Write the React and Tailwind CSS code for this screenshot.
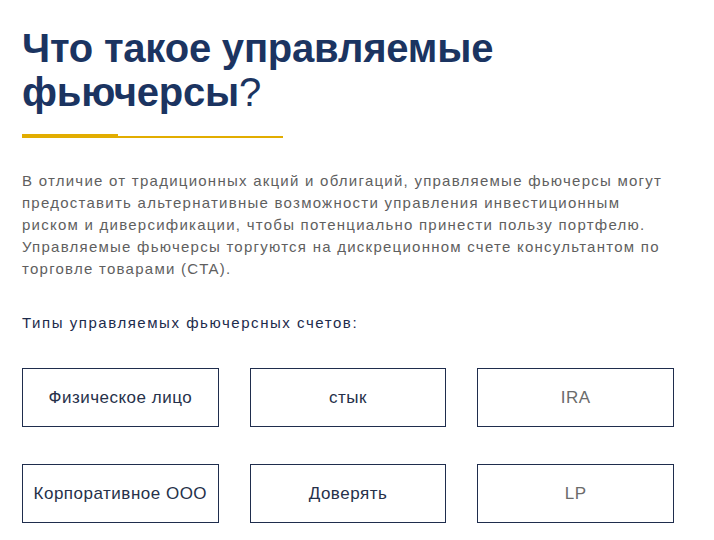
import React from 'react';

const types = [
    {label: 'Физическое лицо', dim: false},
    {label: 'стык', dim: false},
    {label: 'IRA', dim: true},
    {label: 'Корпоративное ООО', dim: false},
    {label: 'Доверять', dim: false},
    {label: 'LP', dim: true},
];

const lines = [
    'В отличие от традиционных акций и облигаций, управляемые фьючерсы могут',
    'предоставить альтернативные возможности управления инвестиционным',
    'риском и диверсификации, чтобы потенциально принести пользу портфелю.',
    'Управляемые фьючерсы торгуются на дискреционном счете консультантом по',
    'торговле товарами (CTA).',
];

const App = () => {
    return (
        <div className="min-h-[540px] bg-white px-[22px] pt-[26px] font-['Liberation_Sans',Arial,sans-serif]">
            <h2 className="text-[40px] leading-[44px] font-bold text-[#1b3461] tracking-[-0.2px]">
                Что такое управляемые
                <br />
                фьючерсы<span className="font-normal">?</span>
            </h2>
            <div className="mt-[20px] flex items-end w-[261px]">
                <div className="h-[4px] w-[96px] bg-[#e2ad00]" />
                <div className="h-[2px] flex-1 bg-[#e2ad00]" />
            </div>
            <p className="mt-[32px] text-[15px] leading-[22px] text-[#5f5f5f] tracking-[1.25px] whitespace-nowrap">
                {lines.map((l) => (
                    <span key={l} className="block">{l}</span>
                ))}
            </p>
            <p className="mt-[32px] text-[15px] leading-[22px] text-[#1d2b4c] tracking-[1.55px]">
                Типы управляемых фьючерсных счетов:
            </p>
            <div className="mt-[34px] grid grid-cols-3 gap-x-[31px] gap-y-[37px] w-[652px]">
                {types.map((t) => (
                    <div
                        key={t.label}
                        className={`h-[59px] border-[1.5px] border-[#1f2d4d] flex items-center justify-center text-[17px] tracking-[0.5px] ${t.dim ? 'text-[#6b6b6b]' : 'text-[#26314a]'}`}
                    >
                        {t.label}
                    </div>
                ))}
            </div>
        </div>
    );
};

export default App;
